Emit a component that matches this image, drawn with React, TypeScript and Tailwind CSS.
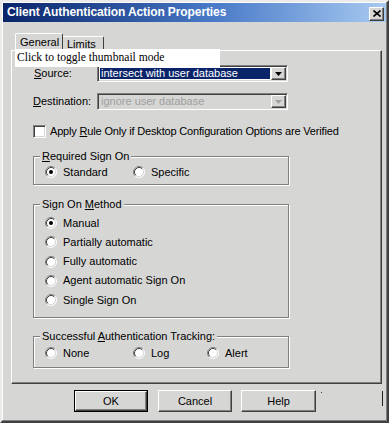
import React from "react";

const raised =
  "border border-t-white border-l-white border-r-[#404040] border-b-[#404040] shadow-[inset_-1px_-1px_0_#808080]";

const Radio = ({ checked }: { checked?: boolean }) => (
  <svg width="12" height="12" viewBox="0 0 12 12" className="shrink-0">
    <circle cx="6" cy="6" r="5" fill="#fff" />
    <path d="M2.11 9.89 A5.5 5.5 0 0 1 9.89 2.11" fill="none" stroke="#808080" strokeWidth="1" />
    <path d="M9.89 2.11 A5.5 5.5 0 0 1 2.11 9.89" fill="none" stroke="#fff" strokeWidth="1" />
    <path d="M2.82 9.18 A4.5 4.5 0 0 1 9.18 2.82" fill="none" stroke="#404040" strokeWidth="1" />
    <path d="M9.18 2.82 A4.5 4.5 0 0 1 2.82 9.18" fill="none" stroke="#d6d6d4" strokeWidth="1" />
    {checked && <circle cx="6" cy="6" r="2" fill="#000" />}
  </svg>
);

const Option = ({ label, checked, className = "" }: { label: React.ReactNode; checked?: boolean; className?: string }) => (
  <div className={`flex items-center h-[14px] gap-[6px] ${className}`}>
    <Radio checked={checked} />
    <span>{label}</span>
  </div>
);

const Arrow = ({ color }: { color: string }) => (
  <svg width="7" height="4" viewBox="0 0 7 4">
    <path d="M0 0 H7 L3.5 4 Z" fill={color} />
  </svg>
);

const Combo = ({ text, disabled }: { text: string; disabled?: boolean }) => (
  <div className="w-[191px] h-[17px] flex border border-t-[#808080] border-l-[#808080] border-r-white border-b-white shadow-[inset_1px_1px_0_#404040] p-[1px]">
    {disabled ? (
      <div className="flex-1 flex items-center pl-[2px] text-[#a0a0a0] bg-[#d6d6d4]">{text}</div>
    ) : (
      <div className="flex-1 flex items-center bg-white p-[1px]">
        <div className="flex-1 h-full flex items-center pl-[1px] bg-[#0a246a] text-white">{text}</div>
      </div>
    )}
    <div className={`w-[15px] h-full flex items-center justify-center bg-[#d6d6d4] ${raised}`}>
      <Arrow color={disabled ? "#a0a0a0" : "#000"} />
    </div>
  </div>
);

const Group = ({ legend, className = "", children }: { legend: React.ReactNode; className?: string; children: React.ReactNode }) => (
  <fieldset
    className={`ml-[21px] w-[256px] border border-[#808080] shadow-[inset_1px_1px_0_#fff,1px_1px_0_#fff] ${className}`}
  >
    <legend className="ml-[6px] px-[2px] leading-[13px] bg-[#d6d6d4]">{legend}</legend>
    {children}
  </fieldset>
);

export default function App() {
  return (
    <div className="w-[392px] h-[426px] bg-white font-['Liberation_Sans',Arial,sans-serif] text-[11px] leading-[13px] text-black">
      <div className="w-[389px] h-[423px] bg-[#d6d6d4] border-2 border-t-[#ebebea] border-l-[#ebebea] border-r-[#404040] border-b-[#404040] shadow-[inset_-1px_-1px_0_#808080,inset_1px_1px_0_#fff] p-[1px] flex flex-col">
        {/* title bar */}
        <div className="h-[19px] flex items-center bg-linear-to-r from-[#0a246a] via-[#4a7ac8] via-55% to-[#a8caf0] pl-[4px] pr-[2px]">
          <span className="text-white font-bold text-[12px] tracking-[-0.1px] flex-1">Client Authentication Action Properties</span>
          <div className={`w-[15px] h-[14px] mt-[2px] bg-[#d6d6d4] flex items-center justify-center ${raised}`}>
            <svg width="8" height="7" viewBox="0 0 8 7">
              <path d="M0.5 0.5 L7.5 6.5 M7.5 0.5 L0.5 6.5" stroke="#000" strokeWidth="1.6" />
            </svg>
          </div>
        </div>

        {/* tabs */}
        <div className="relative flex items-end ml-[12px] mt-[11px] h-[18px] -mb-[1px] z-10">
          <div className="w-[48px] h-[18px] bg-[#d6d6d4] border border-t-white border-l-white border-r-[#404040] border-b-0 rounded-t-[2px] pl-[4px] pt-[2px]">
            General
          </div>
          <div className="w-[41px] h-[15px] border-t border-r border-t-white border-r-[#404040] rounded-tr-[2px] pl-[4px] pt-[1px]">
            Limits
          </div>
        </div>

        {/* tab panel */}
        <div className={`relative ml-[8px] w-[371px] h-[334px] flex flex-col ${raised}`}>
          <div className="absolute left-[3px] -top-[2px] w-[205px] h-[18px] bg-white text-[11.6px] leading-[18px] pl-[2px] z-20 font-['Liberation_Serif','Times_New_Roman',serif]">
            Click to toggle thumbnail mode
          </div>

          <div className="flex items-center mt-[14px] pl-[22px]">
            <span className="w-[63px]">
              <u>S</u>ource:
            </span>
            <Combo text="intersect with user database" />
          </div>
          <div className="flex items-center mt-[11px] pl-[21px]">
            <span className="w-[64px]">
              <u>D</u>estination:
            </span>
            <Combo text="ignore user database" disabled />
          </div>

          <div className="flex items-center mt-[15px] pl-[21px] gap-[4px]">
            <div className="w-[13px] h-[13px] bg-white border border-t-[#808080] border-l-[#808080] border-r-white border-b-white shadow-[inset_1px_1px_0_#404040,inset_-1px_-1px_0_#d6d6d4]" />
            <span className="tracking-[-0.17px]">
              Apply <u>R</u>ule Only if Desktop Configuration Options are Verified
            </span>
          </div>

          <Group
            className="mt-[12px] pb-[5px]"
            legend={
              <>
                <u>R</u>equired Sign On
              </>
            }
          >
            <div className="flex mt-[2px] pl-[11px]">
              <Option label="Standard" checked className="w-[88px]" />
              <Option label="Specific" />
            </div>
          </Group>

          <Group
            className="mt-[13px] pb-[10px]"
            legend={
              <>
                Sign On <u>M</u>ethod
              </>
            }
          >
            <div className="flex flex-col gap-[5.3px] mt-[5px] pl-[11px]">
              <Option label="Manual" checked />
              <Option label="Partially automatic" />
              <Option label="Fully automatic" />
              <Option label="Agent automatic Sign On" />
              <Option label="Single Sign On" />
            </div>
          </Group>

          <Group
            className="mt-[12px] pb-[7px]"
            legend={
              <>
                Successful <u>A</u>uthentication Tracking:
              </>
            }
          >
            <div className="flex mt-[3px] pl-[11px]">
              <Option label="None" className="w-[88px]" />
              <Option label="Log" className="w-[74px]" />
              <Option label="Alert" />
            </div>
          </Group>
        </div>

        {/* buttons */}
        <div className="flex items-start mt-[6px] ml-[71px]">
          <div className="w-[74px] h-[22px] flex items-center justify-center border border-black">
            <div className={`w-full h-full flex items-center justify-center ${raised}`}>OK</div>
          </div>
          <div className={`ml-[10px] w-[74px] h-[22px] flex items-center justify-center ${raised}`}>Cancel</div>
          <div className={`ml-[9px] w-[75px] h-[22px] flex items-center justify-center ${raised}`}>Help</div>
          <div className="ml-[5px] mt-[2px] w-[1px] h-[1px] bg-[#404040]" />
          <div className="ml-auto mr-[3px] mt-[1px] w-[1px] h-[15px] bg-[#202020]" />
        </div>
      </div>
    </div>
  );
}
